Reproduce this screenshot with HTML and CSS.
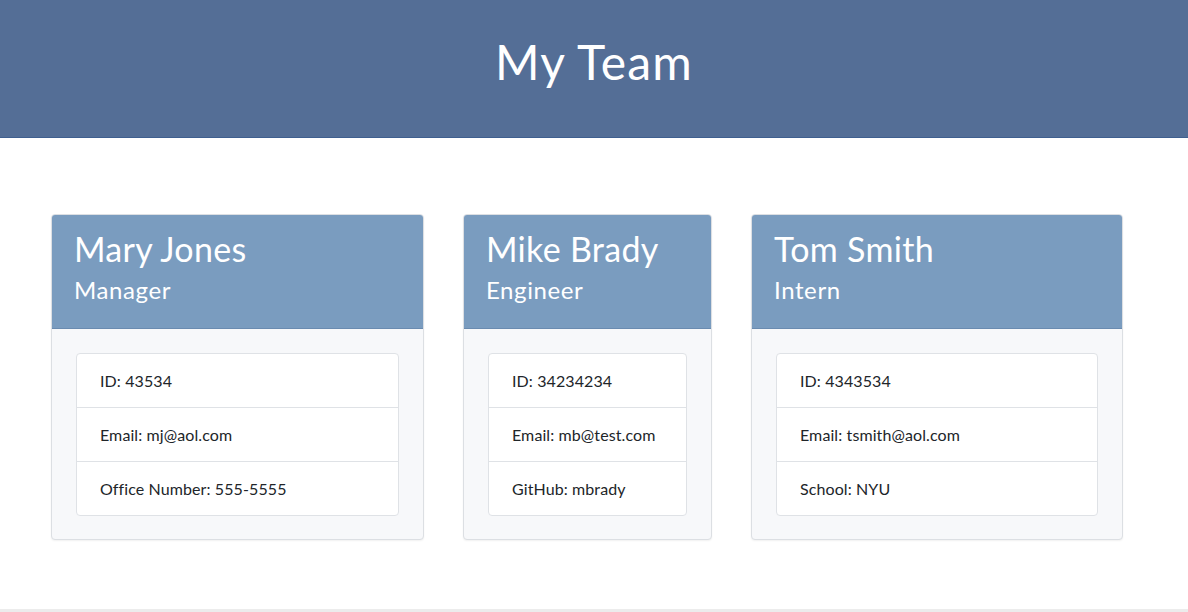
FILE: index.html
```html
<!DOCTYPE html>
<html lang="en">
<head>
<meta charset="utf-8">
<title>My Team</title>
<link rel="stylesheet" href="styles.css">
</head>
<body>
<header class="jumbo">
  <h1 class="jumbo-title">My Team</h1>
</header>
<main class="team">
  <section class="card">
    <div class="card-head">
      <h2 class="card-name">Mary Jones</h2>
      <h3 class="card-role">Manager</h3>
    </div>
    <div class="card-body">
      <ul class="info">
        <li class="info-item">ID: 43534</li>
        <li class="info-item">Email: mj@aol.com</li>
        <li class="info-item">Office Number: 555-5555</li>
      </ul>
    </div>
  </section>
  <section class="card">
    <div class="card-head">
      <h2 class="card-name">Mike Brady</h2>
      <h3 class="card-role">Engineer</h3>
    </div>
    <div class="card-body">
      <ul class="info">
        <li class="info-item">ID: 34234234</li>
        <li class="info-item">Email: mb@test.com</li>
        <li class="info-item">GitHub: mbrady</li>
      </ul>
    </div>
  </section>
  <section class="card">
    <div class="card-head">
      <h2 class="card-name">Tom Smith</h2>
      <h3 class="card-role">Intern</h3>
    </div>
    <div class="card-body">
      <ul class="info">
        <li class="info-item">ID: 4343534</li>
        <li class="info-item">Email: tsmith@aol.com</li>
        <li class="info-item">School: NYU</li>
      </ul>
    </div>
  </section>
</main>
<footer class="foot"></footer>
</body>
</html>
```
FILE: styles.css
```css
* { box-sizing: border-box; }
html, body { margin: 0; padding: 0; }
body {
  font-family: Lato, "Open Sans", sans-serif;
  color: #212529;
  background: #fff;
  height: 612px;
  overflow: hidden;
}
.jumbo {
  height: 138px;
  background: #546e96;
  border-bottom: 1px solid #3f5f8f;
  display: flex;
  justify-content: center;
  padding-top: 38px;
}
.jumbo-title {
  margin: 0;
  color: #fff;
  font-weight: 400;
  font-size: 48px;
  letter-spacing: 1.2px;
  line-height: 1;
  height: 48px;
}
.team {
  display: grid;
  grid-template-columns: 373px 249px 372px;
  column-gap: 39px;
  padding: 76px 0 0 51px;
  align-items: start;
  height: 471px;
}
.card {
  border: 1px solid #dcdfe3;
  border-radius: 4px;
  overflow: hidden;
  background: #f7f8fa;
  box-shadow: 0 1px 2px rgba(0,0,0,0.06);
}
.card-head {
  background: #7a9cbf;
  color: #fff;
  height: 114px;
  padding: 14px 23px 0 22px;
  border-bottom: 1px solid #6a8bb0;
}
.card-name {
  margin: 0;
  font-size: 34px;
  letter-spacing: 0.3px;
  font-weight: 400;
  line-height: 1.2;
}
.card-role {
  margin: 6px 0 0;
  font-size: 24px;
  letter-spacing: 0.6px;
  font-weight: 400;
  line-height: 1.2;
}
.card-body {
  padding: 24px 24px 23px;
}
.info {
  list-style: none;
  margin: 0;
  padding: 0;
  background: #fff;
  border: 1px solid #dfe2e6;
  border-radius: 4px;
}
.info-item {
  height: 54px;
  padding: 0 23px;
  display: flex;
  align-items: center;
  font-size: 16px;
  letter-spacing: 0.1px;
  border-top: 1px solid #dfe2e6;
}
.info-item:first-child { border-top: none; height: 53px; }
.foot {
  border-top: 3px solid #ececec;
}
```
